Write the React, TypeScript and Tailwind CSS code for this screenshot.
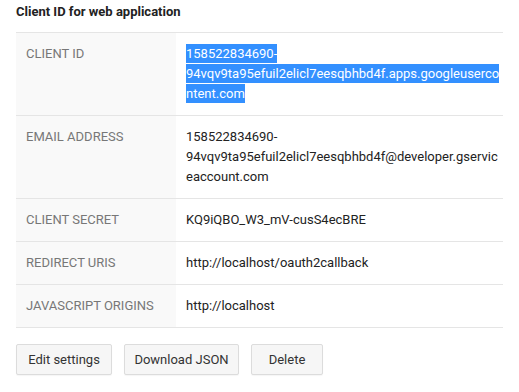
const rows: { label: string; lines: string[]; selected?: boolean }[] = [
  {
    label: "Client ID",
    lines: ["158522834690-", "94vqv9ta95efuil2elicl7eesqbhbd4f.apps.googleuserco", "ntent.com"],
    selected: true,
  },
  {
    label: "Email address",
    lines: ["158522834690-", "94vqv9ta95efuil2elicl7eesqbhbd4f@developer.gservic", "eaccount.com"],
  },
  { label: "Client secret", lines: ["KQ9iQBO_W3_mV-cusS4ecBRE"] },
  { label: "Redirect URIs", lines: ["http://localhost/oauth2callback"] },
  { label: "JavaScript origins", lines: ["http://localhost"] },
];

function Button({ children, className }: { children: React.ReactNode; className: string }) {
  return (
    <button
      className={`h-[31px] rounded-[2px] border border-[#dcdcdc] bg-[#f6f6f6] text-[13px] text-[#333] whitespace-nowrap shadow-[0_1px_1px_rgba(0,0,0,0.04)] ${className}`}
    >
      {children}
    </button>
  );
}

export default function App() {
  return (
    <div className="w-[519px] h-[392px] bg-white px-4 font-['Roboto',_'Liberation_Sans',_sans-serif] text-[13px] text-[#222]">
      {/* Title */}
      <div className="h-[32px] pt-[2px] leading-[20px] font-bold">Client ID for web application</div>

      {/* Details table */}
      <div className="border-t border-[#e5e5e5]">
        {rows.map((r) => {
          const text = r.lines.map((l, i) => (
            <span key={i}>
              {i > 0 && <br />}
              {l}
            </span>
          ));
          return (
            <div key={r.label} className="flex border-b border-[#e5e5e5]">
              <div className="w-[160px] shrink-0 bg-[#f9f9f9] px-[10px] py-[11px] leading-[20px] uppercase text-[#777]">
                {r.label}
              </div>
              <div className="flex-1 min-w-0 px-[10px] py-[11px] leading-[20px] whitespace-nowrap">
                {r.selected ? (
                  <span className="bg-[#3390ff] text-white py-[2px]">{text}</span>
                ) : (
                  text
                )}
              </div>
            </div>
          );
        })}
      </div>

      {/* Actions */}
      <div className="flex gap-3 mt-4">
        <Button className="w-[96px]">Edit settings</Button>
        <Button className="w-[115px]">Download JSON</Button>
        <Button className="w-[72px]">Delete</Button>
      </div>
    </div>
  );
}
